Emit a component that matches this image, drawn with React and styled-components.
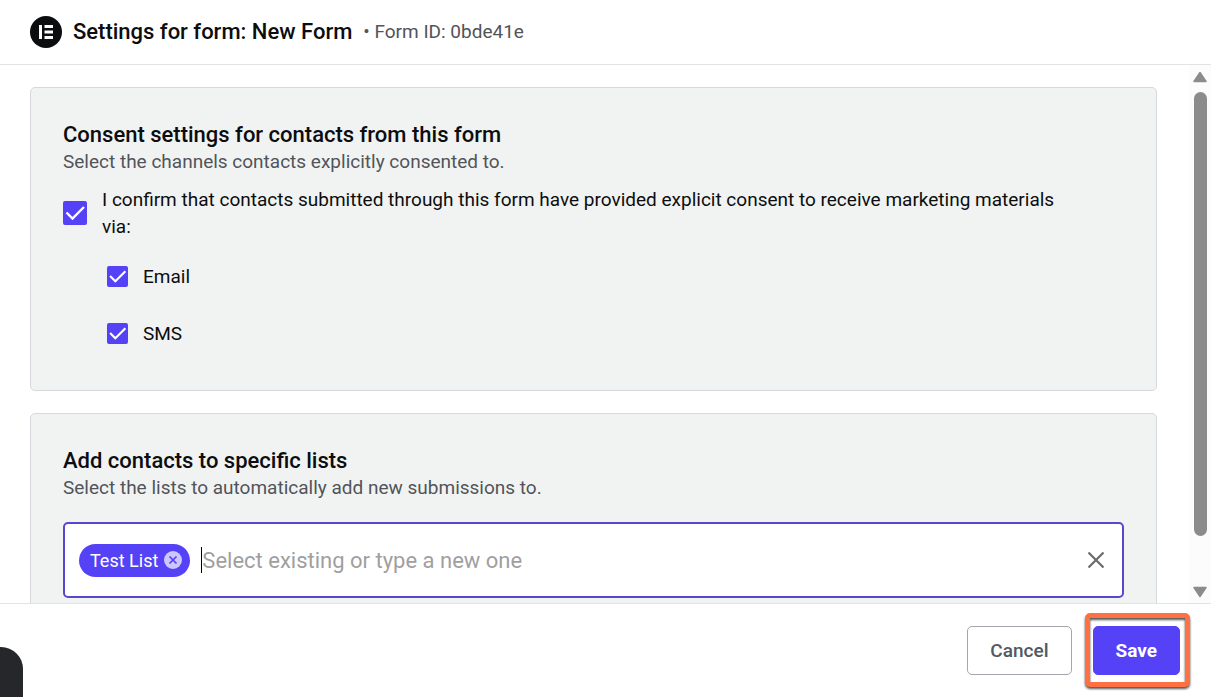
import React, { useState } from "react";
import styled, { createGlobalStyle } from "styled-components";

const GlobalStyle = createGlobalStyle`
  * {
    box-sizing: border-box;
  }

  body {
    margin: 0;
    background: #fff;
    color: #0c0d0e;
    font-family: Roboto, "Liberation Sans", sans-serif;
  }

  button,
  input {
    font-family: inherit;
  }
`;

// Styled components
const Dialog = styled.div`
  position: relative;
  display: flex;
  flex-direction: column;
  height: 100vh;
  overflow: hidden;
`;

const Header = styled.header`
  display: flex;
  align-items: center;
  flex-shrink: 0;
  height: 65px;
  padding: 0 30px;
  border-bottom: 1px solid #e2e3e5;
`;

const Logo = styled.svg`
  width: 32px;
  height: 32px;
  margin-right: 11px;
`;

const Title = styled.h1`
  margin: 0 11px 0 0;
  font-size: 22px;
  font-weight: 500;
  line-height: 28px;
`;

const FormId = styled.span`
  color: #515459;
  font-size: 19px;
  line-height: 28px;
`;

const Body = styled.div`
  display: flex;
  flex: 1;
  min-height: 0;
`;

const ScrollArea = styled.main`
  display: flex;
  flex-direction: column;
  flex: 1;
  gap: 22px;
  padding: 22px 32px 22px 30px;
  overflow-y: auto;
  scrollbar-width: none;
`;

const ScrollTrack = styled.div`
  display: flex;
  flex-direction: column;
  align-items: center;
  justify-content: space-between;
  width: 22px;
  padding: 6px 0 5px;
  background: #fcfcfc;
`;

const ScrollArrow = styled.svg`
  width: 14px;
  height: 12px;
`;

const ScrollRail = styled.div`
  flex: 1;
  width: 13px;
  margin: 9px 0;
`;

const ScrollThumb = styled.div`
  height: 91.5%;
  border-radius: 7px;
  background: #8b8b8b;
`;

const Card = styled.section`
  flex-shrink: 0;
  padding: 32px 32px 28px;
  border: 1px solid #d5d8dc;
  border-radius: 5px;
  background: #f1f3f3;
`;

const CardTitle = styled.h2`
  margin: 0;
  font-size: 22px;
  font-weight: 500;
  line-height: 30px;
`;

const CardText = styled.p`
  margin: 0;
  color: #515459;
  font-size: 19px;
  line-height: 23px;
`;

const ConsentRow = styled.label`
  display: flex;
  align-items: center;
  gap: 15px;
  margin-top: 13px;
  padding-right: 44px;
  font-size: 19px;
  line-height: 27px;
`;

const ChannelList = styled.div`
  display: flex;
  flex-direction: column;
  padding: 8px 0 0 44px;
`;

const ChannelRow = styled.label`
  display: flex;
  align-items: center;
  gap: 15px;
  height: 57px;
  font-size: 19px;
`;

const CheckWrap = styled.span`
  display: grid;
  flex-shrink: 0;
  width: ${(props) => props.$size}px;
  height: ${(props) => props.$size}px;

  & > * {
    grid-area: 1 / 1;
  }
`;

const CheckInput = styled.input`
  appearance: none;
  width: 100%;
  height: 100%;
  margin: 0;
  border: 2px solid #5542f6;
  border-radius: 2px;
  cursor: pointer;

  &:checked {
    background: #5542f6;
  }

  &:not(:checked) + svg {
    visibility: hidden;
  }
`;

const CheckMark = styled.svg`
  width: 100%;
  height: 100%;
  pointer-events: none;
`;

const ListField = styled.div`
  display: flex;
  align-items: center;
  height: 76px;
  margin-top: 23px;
  padding: 0 16px 0 14px;
  border: 2px solid #5746d0;
  border-radius: 5px;
  background: #fff;
`;

const Chip = styled.span`
  display: flex;
  align-items: center;
  gap: 6px;
  height: 33px;
  margin-right: 11px;
  padding: 0 8px 0 11px;
  border-radius: 17px;
  background: #5542f6;
  color: #fff;
  font-size: 18px;
  white-space: nowrap;
`;

const IconButton = styled.button`
  display: flex;
  padding: 0;
  border: none;
  background: none;
  cursor: pointer;
`;

const Caret = styled.span`
  width: 1px;
  height: 26px;
  background: #000;
`;

const ListInput = styled.input`
  flex: 1;
  min-width: 0;
  height: 32px;
  padding: 0;
  border: none;
  outline: none;
  background: none;
  color: #0c0d0e;
  font-size: 22px;

  &::placeholder {
    color: #9f9f9f;
    opacity: 1;
  }
`;

const Footer = styled.footer`
  display: flex;
  align-items: center;
  justify-content: flex-end;
  flex-shrink: 0;
  gap: 21px;
  height: 94px;
  padding: 0 31px;
  border-top: 1px solid #e2e3e5;
`;

const Button = styled.button`
  height: 49px;
  padding: 0 22px;
  border: 1px solid ${(props) => (props.$primary ? "#5542f6" : "#a4a7ab")};
  border-radius: 5px;
  background: ${(props) => (props.$primary ? "#5542f6" : "#fff")};
  color: ${(props) => (props.$primary ? "#fff" : "#515962")};
  font-size: 19px;
  font-weight: ${(props) => (props.$primary ? 700 : 500)};
  cursor: pointer;
`;

const SaveWrap = styled.div`
  position: relative;
`;

// Frame around the save button
const Highlight = styled.div`
  position: absolute;
  inset: -13px -10px -12px -8px;
  border: 5px solid #ff7043;
  border-radius: 5px;
  filter: drop-shadow(0 2px 1px #555);
  pointer-events: none;
`;

const CornerWidget = styled.div`
  position: absolute;
  bottom: 0;
  left: 0;
  width: 23px;
  height: 50px;
  border-radius: 0 22px 0 0;
  background: #26272b;
`;

const Checkbox = ({ size, checked, onChange }) => (
  <CheckWrap $size={size}>
    <CheckInput type="checkbox" checked={checked} onChange={onChange} />
    <CheckMark viewBox="0 0 24 24" fill="none" stroke="#fff">
      <path d="M3.500 11.500l6 6L21 6" strokeWidth="2.400" />
    </CheckMark>
  </CheckWrap>
);

const App = () => {
  const [consent, setConsent] = useState(true);
  const [channels, setChannels] = useState({ Email: true, SMS: true });
  const [lists, setLists] = useState(["Test List"]);
  const [query, setQuery] = useState("");

  const toggleChannel = (name) => {
    setChannels({ ...channels, [name]: !channels[name] });
  };

  const removeList = (name) => {
    setLists(lists.filter((list) => list !== name));
  };

  const clearAll = () => {
    setLists([]);
    setQuery("");
  };

  return (
    <Dialog>
      <GlobalStyle />
      <Header>
        <Logo viewBox="0 0 32 32" aria-hidden="true">
          <circle cx="16" cy="16" r="16" fill="#0c0d0e" />
          <path
            d="M9 9h3v14H9zM14.500 9H23v3h-8.500zM14.500 14.500H23v3h-8.500zM14.500 20H23v3h-8.500z"
            fill="#fff"
          />
        </Logo>
        <Title>Settings for form: New Form</Title>
        <FormId>• Form ID: 0bde41e</FormId>
      </Header>

      <Body>
        <ScrollArea>
          <Card>
            <CardTitle>Consent settings for contacts from this form</CardTitle>
            <CardText>
              Select the channels contacts explicitly consented to.
            </CardText>
            <ConsentRow>
              <Checkbox
                size={24}
                checked={consent}
                onChange={() => setConsent(!consent)}
              />
              <span>
                I confirm that contacts submitted through this form have
                provided explicit consent to receive marketing materials via:
              </span>
            </ConsentRow>
            <ChannelList>
              {Object.keys(channels).map((name) => (
                <ChannelRow key={name}>
                  <Checkbox
                    size={21}
                    checked={channels[name]}
                    onChange={() => toggleChannel(name)}
                  />
                  {name}
                </ChannelRow>
              ))}
            </ChannelList>
          </Card>

          <Card>
            <CardTitle>Add contacts to specific lists</CardTitle>
            <CardText>
              Select the lists to automatically add new submissions to.
            </CardText>
            <ListField>
              {lists.map((list) => (
                <Chip key={list}>
                  {list}
                  <IconButton
                    aria-label={`Remove ${list}`}
                    onClick={() => removeList(list)}
                  >
                    <svg width="18" height="18" viewBox="0 0 18 18">
                      <circle cx="9" cy="9" r="9" fill="#ccc6fc" />
                      <path
                        d="M5.500 5.500l7 7M12.500 5.500l-7 7"
                        stroke="#5542f6"
                        strokeWidth="1.700"
                      />
                    </svg>
                  </IconButton>
                </Chip>
              ))}
              {!query && <Caret />}
              <ListInput
                aria-label="Lists"
                placeholder="Select existing or type a new one"
                value={query}
                onChange={(e) => setQuery(e.target.value)}
              />
              <IconButton aria-label="Clear" onClick={clearAll}>
                <svg width="20" height="20" viewBox="0 0 20 20">
                  <path
                    d="M2.500 2.500l15 15M17.500 2.500l-15 15"
                    stroke="#6b6b6b"
                    strokeWidth="2.200"
                  />
                </svg>
              </IconButton>
            </ListField>
          </Card>
        </ScrollArea>

        <ScrollTrack aria-hidden="true">
          <ScrollArrow viewBox="0 0 14 12">
            <path
              d="M7 1.500L13 10.500H1z"
              fill="#8b8b8b"
              stroke="#8b8b8b"
              strokeWidth="1.500"
              strokeLinejoin="round"
            />
          </ScrollArrow>
          <ScrollRail>
            <ScrollThumb />
          </ScrollRail>
          <ScrollArrow viewBox="0 0 14 12">
            <path
              d="M7 10.500L13 1.500H1z"
              fill="#8b8b8b"
              stroke="#8b8b8b"
              strokeWidth="1.500"
              strokeLinejoin="round"
            />
          </ScrollArrow>
        </ScrollTrack>
      </Body>

      <Footer>
        <Button>Cancel</Button>
        <SaveWrap>
          <Button $primary>Save</Button>
          <Highlight />
        </SaveWrap>
      </Footer>
      <CornerWidget />
    </Dialog>
  );
};

export default App;
